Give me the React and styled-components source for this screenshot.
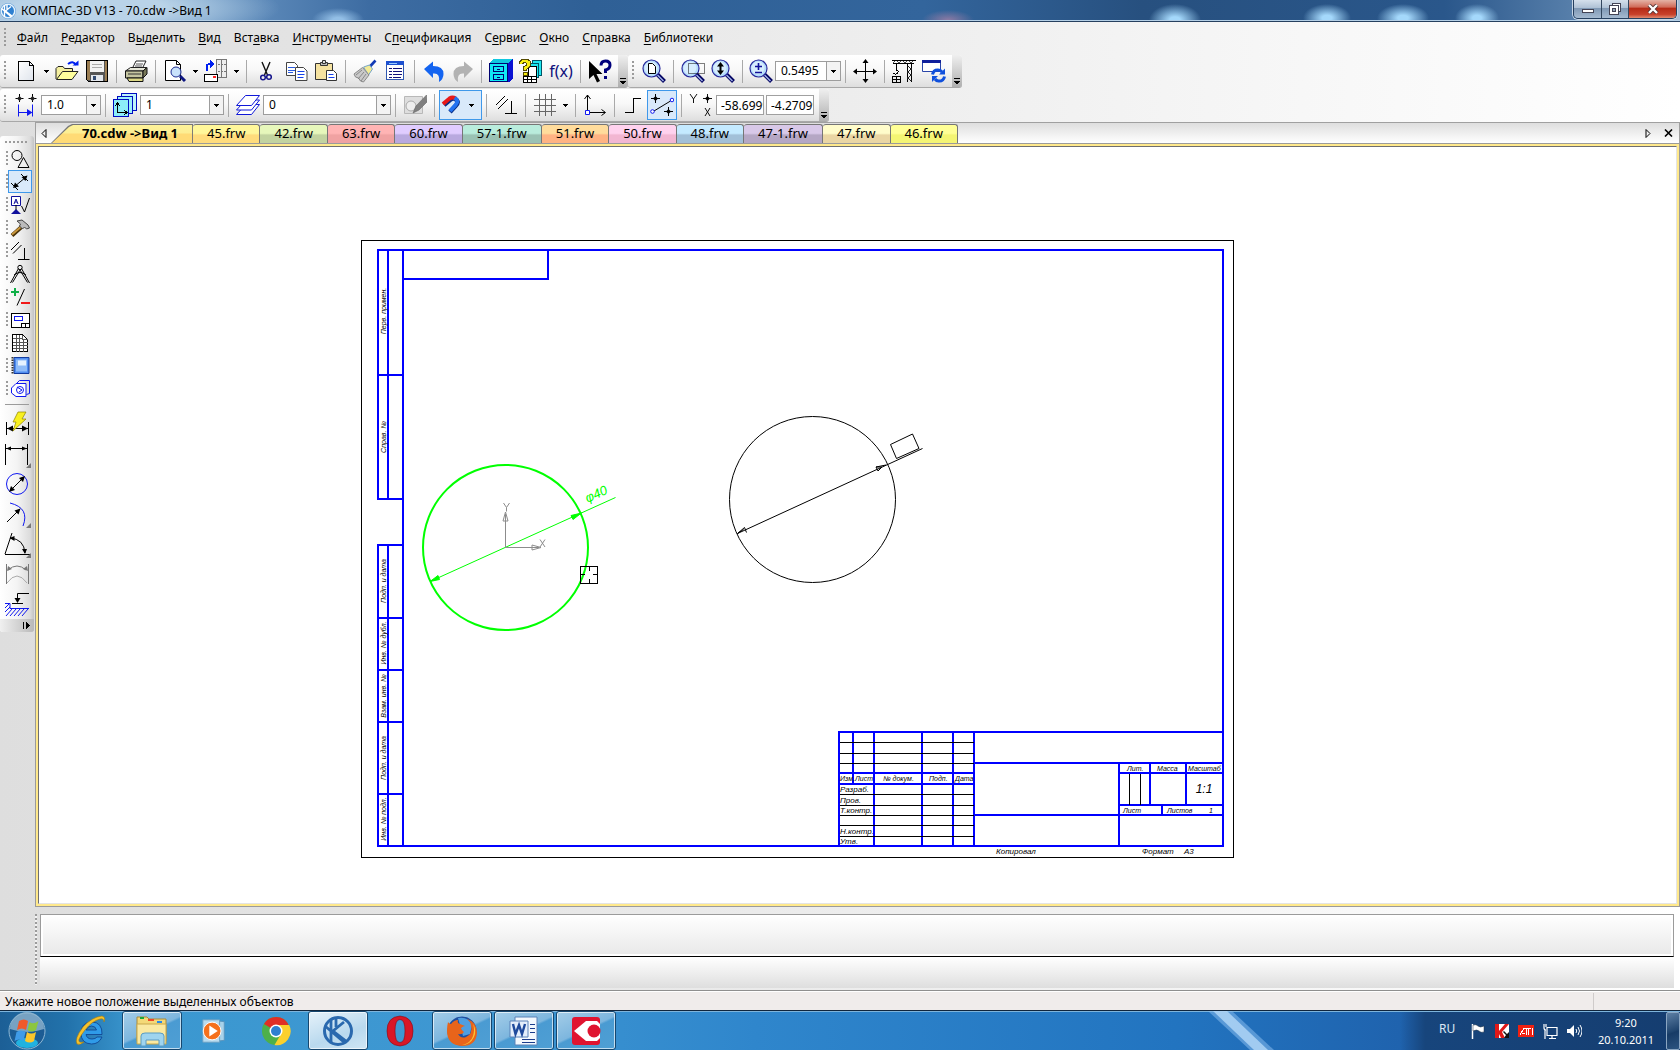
import React from "react";
import styled, { createGlobalStyle } from "styled-components";

const UI = '"Noto Sans", "Open Sans", sans-serif';

const Global = createGlobalStyle`
  * { box-sizing: border-box; }
  html, body, #root { height: 100%; }
  body { margin: 0; font-family: ${UI}; font-size: 12px; line-height: 16px; color: #000; overflow: hidden; }
  button, input, select { font: inherit; color: inherit; margin: 0; padding: 0; }
  button { border: 0; background: none; cursor: default; }
  svg { display: block; }
`;

const Screen = styled.div`
  height: 100vh;
  display: flex;
  flex-direction: column;
  background: linear-gradient(90deg, #dedede 0%, #ebebeb 45%, #f5f5f5 72%, #ffffff 100%);
`;

/* ---------- title bar ---------- */
const TitleBar = styled.header`
  flex: none;
  height: 22px;
  display: flex;
  justify-content: space-between;
  border-bottom: 1px solid #26405f;
  box-shadow: inset 0 -1px 0 #b4cfe6;
  background:
    radial-gradient(ellipse 26px 16px at 1175px 20px, #a4d8fb 20%, transparent 100%),
    radial-gradient(ellipse 24px 14px at 1327px 18px, #a4d8fb 20%, transparent 100%),
    radial-gradient(ellipse 26px 14px at 1403px 18px, #a4d8fb 20%, transparent 100%),
    radial-gradient(ellipse 22px 14px at 1477px 18px, #a4d8fb 20%, transparent 100%),
    radial-gradient(ellipse 26px 12px at 338px 20px, #93bfe6 20%, transparent 100%),
    radial-gradient(ellipse 26px 10px at 948px 20px, #8c7aa4 0%, transparent 100%),
    radial-gradient(ellipse 190px 34px at 90px 8px, #b9d3e8 40%, transparent 100%),
    linear-gradient(90deg, #7fa6cc 0%, #6b97c4 12%, #3d6ca2 22%, #2f6096 35%, #33659c 55%, #27507f 68%, #2a578b 86%, #5f86b0 95%, #a9bfd6 100%);
`;
const TitleText = styled.h1`
  display: flex;
  align-items: center;
  gap: 5px;
  margin: 0;
  font-size: 12px;
  font-weight: 400;
`;
const WindowButtons = styled.div`
  display: flex;
  height: 19px;
  margin-right: 3px;
  border: 1px solid #26405f;
  border-top: 0;
  border-radius: 0 0 5px 5px;
  overflow: hidden;
  box-shadow: 0 0 0 1px #c7d6e6;
`;
const WindowButton = styled.button`
  width: ${(p) => (p.$close ? 48 : 27)}px;
  display: grid;
  place-items: center;
  border-left: ${(p) => (p.$first ? 0 : 1)}px solid #33475f;
  background: ${(p) =>
    p.$close
      ? "linear-gradient(#e4b3a6 0%, #d06a58 40%, #b52a16 45%, #c8402a 80%, #e08a70 100%)"
      : "linear-gradient(#d5e0ec 0%, #b0c2d6 42%, #7f98b4 46%, #a5bad0 100%)"};
`;

/* ---------- menu ---------- */
const MenuBar = styled.nav`
  flex: none;
  height: 33px;
  display: flex;
  align-items: center;
  gap: 13px;
  padding: 0 0 2px 4px;
`;
const MenuItem = styled.button`
  u { text-underline-offset: 2px; }
`;
const Grip = styled.span`
  flex: none;
  width: ${(p) => (p.$across ? "24px" : "2px")};
  height: ${(p) => (p.$across ? "2px" : p.$h ? p.$h + "px" : "20px")};
  background: repeating-linear-gradient(${(p) => (p.$across ? 90 : 180)}deg, #9b9b9b 0 2px, transparent 2px 4px);
`;
const MenuGrip = styled(Grip)`
  margin-right: -2px;
`;

/* ---------- tool bars ---------- */
const BarRows = styled.div`
  flex: none;
  display: flex;
  flex-direction: column;
  gap: 1px;
`;
const BarRow = styled.div`
  display: flex;
`;
const Bar = styled.div`
  display: flex;
  height: 33px;
  border-radius: 3px;
  border-bottom: 1px solid #a8a8a8;
  overflow: hidden;
  background: linear-gradient(#ffffff 0%, #f8f8f8 45%, #dedede 100%);
`;
const BarBody = styled.div`
  display: flex;
  align-items: center;
  padding: 0 3px 0 4px;
  > ${Grip} { margin-right: 5px; }
`;
const Overflow = styled.button`
  width: 10px;
  display: flex;
  align-items: flex-end;
  justify-content: center;
  && { padding-bottom: 3px; }
  background: linear-gradient(#efefef, #b0b0b0);
`;
const Tool = styled.button`
  flex: none;
  width: ${(p) => p.$w || 30}px;
  height: 30px;
  display: flex;
  align-items: center;
  justify-content: center;
  border: 1px solid ${(p) => (p.$on ? "#3f98ea" : "transparent")};
  background: ${(p) => (p.$on ? "#d9e9fa" : "none")};
`;
const Drop = styled.button`
  width: 11px;
  height: 30px;
  display: grid;
  place-items: center;
`;
const Sep = styled.span`
  flex: none;
  width: 1px;
  height: 23px;
  margin: 0 4px;
  background: #a9a9a9;
`;
const Combo = styled.span`
  position: relative;
  width: ${(p) => p.$w}px;
  height: 20px;
  select {
    width: 100%;
    height: 20px;
    padding-left: 5px;
    appearance: none;
    border: 1px solid #9d9d9d;
    border-radius: 0;
    background: #fff;
  }
  svg {
    position: absolute;
    right: 1px;
    top: 1px;
    pointer-events: none;
  }
`;
const Coord = styled.input`
  && { padding-left: 4px; }
  width: 48px;
  height: 20px;
  margin-right: 2px;
  border: 1px solid #a0a0a0;
  background: #fff;
`;
const FxText = styled.span`
  color: #10107c;
  font-size: 16px;
  line-height: 24px;
`;

/* ---------- work area ---------- */
const Work = styled.div`
  flex: 1;
  min-height: 0;
  display: flex;
`;
const Side = styled.aside`
  flex: none;
  width: 35px;
  padding-top: 14px;
`;
const SideBar = styled.div`
  width: 34px;
  display: flex;
  flex-direction: column;
  align-items: center;
  border-radius: 3px;
  overflow: hidden;
  background: linear-gradient(90deg, #ffffff 0%, #f4f4f4 50%, #dcdcdc 88%, #c4c4c4 100%);
  > ${Grip} { margin: 5px 0 4px; }
`;
const SideRow = styled.div`
  height: 23px;
  width: 34px;
  display: flex;
  align-items: center;
  padding-left: 6px;
`;
const SideTool = styled.button`
  width: 24px;
  height: 23px;
  display: grid;
  place-items: center;
  border: 1px solid ${(p) => (p.$on ? "#3f98ea" : "transparent")};
  background: ${(p) => (p.$on ? "#d9e9fa" : "none")};
`;
const BigTool = styled.button`
  width: 34px;
  height: 30px;
  display: grid;
  place-items: center;
`;
const SideRule = styled.span`
  width: 24px;
  height: 1px;
  margin: 4px 0;
  background: #9b9b9b;
`;
const SideMore = styled.button`
  width: 34px;
  height: 13px;
  display: flex;
  align-items: center;
  justify-content: flex-end;
  && { padding-right: 4px; }
  background: linear-gradient(90deg, #f0f0f0, #b9b9b9);
`;
const Main = styled.main`
  flex: 1;
  min-width: 0;
  display: flex;
  flex-direction: column;
`;
const TabStrip = styled.div`
  flex: none;
  height: 21px;
  display: flex;
  align-items: flex-end;
  border: 1px solid #a0a0a0;
  border-bottom: 0;
  font-size: 13px;
  background: linear-gradient(#dedede, #ffffff);
`;
const Nav = styled.button`
  width: ${(p) => p.$w}px;
  height: 20px;
  display: grid;
  place-items: center;
`;
const ActiveShape = styled.span`
  display: flex;
  background: #767676;
  clip-path: polygon(0 100%, 17px 2px, 21px 0, 100% 0, 100% 100%);
`;
const ActiveTab = styled.button`
  height: 19px;
  && { padding: 0 15px 2px 31px; }
  font-weight: 700;
  background: linear-gradient(#fdf39a 0%, #fdee93 48%, #ffdb76 52%, #ffdb76 100%);
  clip-path: polygon(1px 100%, 18px 3px, 22px 1px, calc(100% - 1px) 1px, calc(100% - 1px) 100%);
`;
const Tab = styled.button`
  height: 19px;
  && { padding: 0 14px 2px; }
  border: 1px solid #767676;
  border-left: 0;
  border-bottom: 0;
  border-radius: 3px 3px 0 0;
  background: linear-gradient(${(p) => p.$a} 0%, ${(p) => p.$a} 46%, ${(p) => p.$b} 56%, ${(p) => p.$b} 100%);
`;
const Fill = styled.span`
  flex: 1;
`;
const Frame = styled.section`
  flex: 1;
  min-height: 0;
  border: 1px solid #9b9b9b;
  padding: 2px;
  background: #ffe98c;
`;
const Canvas = styled.div`
  height: 100%;
  border: 1px solid #6f6f6f;
  border-right-color: #e4e4e4;
  border-bottom-color: #e4e4e4;
  background: #fff;
`;
const Drawing = styled.svg`
  width: 100%;
  height: 100%;
`;
const Stamp = styled.text`
  font-family: "Liberation Sans Narrow", "Liberation Sans", sans-serif;
  font-style: italic;
  font-size: ${(p) => p.$s || 7}px;
  text-anchor: ${(p) => (p.$mid ? "middle" : "start")};
  fill: ${(p) => p.$c || "#000"};
`;
const Lower = styled.div`
  flex: none;
  height: 83px;
  display: flex;
  gap: 3px;
  padding-top: 7px;
  > ${Grip} { background: repeating-linear-gradient(180deg, #9b9b9b 0 2px, #f2f2f2 2px 4px); }
`;
const LowerPanels = styled.div`
  flex: 1;
  margin-right: 6px;
`;
const PropertyPanel = styled.div`
  height: 43px;
  border: 1px solid #9b9b9b;
  border-bottom-color: #000;
  box-shadow: inset 0 0 0 2px #fff;
  background: linear-gradient(#ffffff, #e8e8e8);
`;
const MessagePanel = styled.div`
  height: 31px;
  background: linear-gradient(#ffffff, #dedede);
`;
const Status = styled.footer`
  flex: none;
  height: 20px;
  display: flex;
  align-items: center;
  padding: 2px 0 0 5px;
  border-top: 1px solid #8f8f8f;
  box-shadow: inset 0 1px 0 #fff;
  background: #f0eceb;
`;
const StatusCell = styled.span`
  width: 87px;
  height: 17px;
  border-left: 1px solid #cfcbca;
`;

/* ---------- task bar ---------- */
const TaskBar = styled.div`
  flex: none;
  height: 40px;
  display: flex;
  border-top: 1px solid #10253c;
  box-shadow: inset 0 1px 0 #7db4dc;
  background:
    linear-gradient(90deg, transparent 1400px, #17457c 1425px, #153d70 100%),
    linear-gradient(90deg, #1c5f96 0%, #2272ab 4%, #3b98d0 8%, #3e97d2 28%, #2f86cc 45%, #2274c0 70%, #1f62ad 84%);
`;
const StartButton = styled.button`
  width: 60px;
  && { padding-right: 6px; }
  display: grid;
  place-items: center;
`;
const Task = styled.button`
  width: 60px;
  && { margin-right: 2px; }
  display: grid;
  place-items: center;
  border-radius: 3px;
  border: 1px solid ${(p) => (p.$open ? "#16476f" : "transparent")};
  box-shadow: ${(p) => (p.$open ? "inset 0 0 0 1px rgba(255,255,255,0.65)" : "none")};
  background: ${(p) =>
    p.$active
      ? "linear-gradient(160deg, #e6f2fa, #b9d9ee 60%, #cfe6f4)"
      : p.$open
      ? "linear-gradient(155deg, #a4cde8 0%, #7db6de 48%, #4a9bd2 52%, #4f9fd4 100%)"
      : "none"};
`;
const Beam = styled.svg`
  flex: 1;
  min-width: 0;
  height: 39px;
`;
const Tray = styled.div`
  display: flex;
  align-items: center;
  color: #fff;
`;
const Lang = styled.button`
  width: 27px;
  && { padding-bottom: 4px; }
  text-align: left;
  color: #dbe8f5;
`;
const TrayButton = styled.button`
  width: 24px;
  height: 24px;
  display: grid;
  place-items: center;
`;
const Clock = styled.button`
  width: 80px;
  && { font-size: 11px; line-height: 17px; }
  text-align: center;
`;
const ShowDesktop = styled.button`
  width: 14px;
  height: 38px;
  border: 1px solid #8ba6c2;
  border-radius: 2px;
  background: linear-gradient(160deg, #5d7fa4 0%, #20456f 50%, #173b66 55%, #2c5480 100%);
`;

/* ---------- icons ---------- */
const Svg = ({ s = 24, w, h, v, crisp, children }) => (
  <svg width={w || s} height={h || s} viewBox={v || `0 0 ${w || s} ${h || s}`} fill="none"
    shapeRendering={crisp ? "crispEdges" : "auto"} aria-hidden="true">{children}</svg>
);
const Tri = () => <Svg w={5} h={3} crisp><path d="M0 0h5v1h-1v1h-1v1h-1v-1h-1v-1h-1z" fill="#000" /></Svg>;
const More = () => (
  <Svg w={6} h={6} crisp><path d="M0 0h6v1H0zM0 3h6v1H5v1H4v1H2V5H1V4H0z" fill="#000" /></Svg>
);
const Lens = ({ children }) => (
  <Svg s={24}>
    <path d="M15 15l7.500 7.500" stroke="#000060" strokeWidth="4" />
    <path d="M15 15.500l6.500 6.500" stroke="#9fb0e8" strokeWidth="1.500" />
    <circle cx="9.500" cy="9.500" r="8.500" fill="#b4dcfb" stroke="#2a2a9c" strokeWidth="1.200" />
    <circle cx="9" cy="9" r="6.500" fill="#e6f4ff" opacity=".7" />
    {children}
  </Svg>
);
const I = {
  new: <Svg crisp><defs><linearGradient id="pg" x2="1" y2="1"><stop stopColor="#fff" /><stop offset="1" stopColor="#dfe4ec" /></linearGradient></defs>
    <path d="M4.500 2.500h11l4 4v15h-15z" fill="url(#pg)" stroke="#000" /><path d="M15.500 2.500v4h4" stroke="#000" /></Svg>,
  open: <Svg>
    <path d="M1 20V9.500l2-2h5l1.500 2h8V13" fill="#f5f0a0" stroke="#222" />
    <path d="M1.500 20.500l6-8h15.500l-6 8z" fill="#ffff9c" stroke="#222" />
    <path d="M13 5q5-4 8 1" stroke="#0020f0" strokeWidth="2" /><path d="M17.500 6.500h6v-5z" fill="#0020f0" />
  </Svg>,
  save: <Svg crisp><path d="M1.500 1.500h21v21h-19l-2-2z" fill="#555" stroke="#000" /><path d="M2 2h3v19H2z" fill="#9a7d52" />
    <path d="M20 2h2v20h-2z" fill="#9a7d52" /><path d="M5 2h14v11H5z" fill="#f2f2f2" /><path d="M7 5h10M7 8h10" stroke="#aaa" />
    <path d="M6 16h12v6H6z" fill="#e4e8ee" /><path d="M8 17h3v4H8z" fill="#334c74" /></Svg>,
  print: <Svg><path d="M8 10l4-8h10l-4 8z" fill="#fff" stroke="#222" /><path d="M12 5h7M11 7h7" stroke="#555" />
    <path d="M1.500 12l5-3.500h16L19 12z" fill="#e6e6d8" stroke="#222" /><path d="M1.500 12H19v7H1.500z" fill="#c4c4a0" stroke="#111" />
    <path d="M19 12l4-3.500V15l-4 4z" fill="#777758" stroke="#111" /><path d="M3 19h16v3.500H5z" fill="#dcd886" stroke="#111" /><path d="M4 15h13" stroke="#333" /></Svg>,
  preview: <Svg><path d="M2.500 1.500h11l4 4v16h-15z" fill="#fff" stroke="#000" /><path d="M13.500 1.500v4h4" stroke="#000" />
    <path d="M17 17l5 5" stroke="#0d1580" strokeWidth="3" /><circle cx="13" cy="13" r="5" fill="#c9e2fb" stroke="#1a2a90" /></Svg>,
  orient: <Svg crisp><path d="M12.500.5h10v18h-10zM17.500.5v18" fill="#eee" stroke="#777" /><path d="M14 5h8M14 12h8" stroke="#777" strokeDasharray="2 1" />
    <path d="M.5 15.500h13v7H.5z" fill="#fff" stroke="#000" /><path d="M9 17h3v2H9z" fill="#f22" />
    <path d="M2.500 12V8q0-3 4-3" stroke="#0020f0" strokeWidth="2" /><path d="M6 1l4 4-4 4z" fill="#0020f0" /></Svg>,
  cut: <Svg><path d="M8 3l5.500 13M16 3l-5.500 13" stroke="#111" strokeWidth="1.400" /><circle cx="9" cy="18.500" r="2.300" stroke="#16168c" strokeWidth="1.500" />
    <circle cx="15" cy="18" r="2.300" stroke="#16168c" strokeWidth="1.500" /></Svg>,
  copy: <Svg><path d="M2.500 3.500h8l3 3v10h-11z" fill="#fff" stroke="#444" /><path d="M4 8.500h7M4 11.500h7M4 13.500h5" stroke="#2a5be0" />
    <path d="M11.500 8.500h8l3.500 3.500v9.500H11.500z" fill="#fff" stroke="#444" /><path d="M13.500 12.500h7M13.500 15.500h7M13.500 18.500h6" stroke="#1540e8" /></Svg>,
  paste: <Svg><path d="M1.500 4.500h17v16h-17z" fill="#f5e2a0" stroke="#333" /><path d="M6.500 3.500h7v3h-7z" fill="#bbb" stroke="#333" /><path d="M8.500 1.500h3v3h-3z" fill="#ddd" stroke="#333" />
    <path d="M12.500 11.500h7l3 3v7h-10z" fill="#fff" stroke="#333" /><path d="M14.500 15.500h5M14.500 18.500h6" stroke="#1540e8" /></Svg>,
  brush: <Svg><path d="M22.500 1.500l-6 6.500" stroke="#123bb5" strokeWidth="2.600" /><path d="M10.500 8l6-2 3 4-4 6z" fill="#f3eb96" stroke="#76a5c8" />
    <path d="M9.500 8.500l6.500 7.500-5.500 7-3-1-2-3-3-1-1.500-3z" fill="#c9c9c9" stroke="#888" /><path d="M9 11l-6 5M11 13l-6 7M13 15l-5 7" stroke="#777" strokeWidth=".8" /></Svg>,
  props: <Svg crisp><path d="M3.500 2.500h17v18h-17z" fill="#fff" stroke="#3058b0" /><path d="M3 2h18v4H3z" fill="#1c50d0" /><path d="M6 4h8" stroke="#9cf" />
    <path d="M6 9.500h3M6 12.500h3M6 15.500h3M6 18.500h3M10 9.500h9M10 12.500h9M10 15.500h9M10 18.500h8" stroke="#12127a" /></Svg>,
  undo: <Svg><path d="M2 10L11 2.500v4.500q10.500 0 10.500 8 0 5-4.500 8 1.500-9.500-6-8.500V19z" fill="#1464f0" /></Svg>,
  redo: <Svg><path d="M22 10L13 2.500v4.500Q2.500 7 2.500 15q0 5 4.500 8-1.500-9.500 6-8.500V19z" fill="#b2b2b2" /></Svg>,
  cabinet: <Svg crisp><path d="M0 4l4-4h20v19l-4 4H0z" fill="#0a12d2" /><path d="M0 4l4-4h19l-4 4z" fill="#10c8e0" /><path d="M.5 4.500h18v18H.5z" fill="#10e8f4" stroke="#000070" />
    <path d="M4.500 7.500h10v5h-10zM4.500 15.500h10v5h-10zM8 10h3M8 18h3" stroke="#000070" /></Svg>,
  manager: <Svg crisp><path d="M13.500 1.500h9v15h-9z" fill="#20e8f0" stroke="#056" /><path d="M11.500 4.500h8v14h-8z" fill="#20e8f0" stroke="#056" />
    <path d="M9.500 7.500h8v10h-8z" fill="#fff" stroke="#000" /><path d="M4.500 17.500h13v6h-13zM4.500 20.500h13M8.500 17.500v6M12.500 17.500v6" fill="#fff" stroke="#000" />
    <path d="M2 5q0-3 4-3t4 3q0 2-4 4v3" stroke="#554b00" strokeWidth="4.500" /><path d="M2 5q0-3 4-3t4 3q0 2-4 4v2" stroke="#f8ee10" strokeWidth="2.600" /><path d="M4 13.500h4v3H4z" fill="#f8ee10" stroke="#554b00" /></Svg>,
  help: <Svg><path d="M1 2v18l4.500-4 3.500 7.500 3-1.500L8.500 15h6z" fill="#000" /><path d="M13 6.500Q13 2 17.500 2T22 6t-4.500 5v3" stroke="#00007c" strokeWidth="3" /><path d="M16 17h3v3h-3z" fill="#00007c" /></Svg>,
  zpage: <Lens><path d="M6.500 4.500h4l3 3v7h-7z" fill="#fff" stroke="#000" /></Lens>,
  zrect: <Lens><path d="M7.500 4.500h16v10h-16z" stroke="#000" strokeDasharray="1 1" /></Lens>,
  zdyn: <Lens><path d="M9.500 3l3.500 4.500h-2.500v4H13l-3.500 4.500-3.500-4.500h2.500v-4H6z" fill="#000" /></Lens>,
  zpm: <Lens><path d="M9.500 4v7M6 7.500h7M6 13.500h7" stroke="#10109a" strokeWidth="1.600" /></Lens>,
  move: <Svg><path d="M12.500 2v20M1 12.500h22" stroke="#000" /><path d="M12.500 0l3 4h-6zM12.500 24l3-4h-6zM0 12.500l4-3v6zM24 12.500l-4-3v6z" fill="#000" /></Svg>,
  crane: <Svg crisp><path d="M0 1.500h24M1 4.500h21" stroke="#000" /><path d="M1 4l3-3 3 3 3-3 3 3 3-3 3 3 3-3" stroke="#000" strokeWidth=".7" /><path d="M4.500 5v6q3 1 1 3t-4 0" stroke="#000" />
    <path d="M15.500 5v18M19.500 5v18" stroke="#000" /><path d="M15 7l5 3-5 3 5 3-5 3 5 3" stroke="#222" /><path d="M.5 17.500h8v6h-8zM4.500 17.500v6M.5 20.500h8" stroke="#000" /></Svg>,
  refresh: <Svg><path d="M.5 1.500h18v11H.5z" fill="#fff" stroke="#2b46a8" /><path d="M0 1h19v3H0z" fill="#10209c" />
    <path d="M10.500 15.500q1-5 6-4.500 2 0 3.500 2" stroke="#1050dc" strokeWidth="3" /><path d="M23 9.500v6h-6z" fill="#1050dc" />
    <path d="M22.500 17.500q-1 5-6 4.500-2 0-3.500-2" stroke="#1050dc" strokeWidth="3" /><path d="M10 23v-6h6z" fill="#1050dc" /></Svg>,
  step: <Svg><path d="M5.500 1v8M1.500 5.500h8M18.500 1v8M14.500 5.500h8" stroke="#000" /><path d="M5.500 3l2.500 2.500L5.500 8 3 5.500zM18.500 3l2.500 2.500-2.500 2.500L16 5.500z" fill="#222" /><path d="M4.500 11.500v12M18.500 11.500v12M5 19.500h12" stroke="#1018f0" /><path d="M13 16l5.500 3.500L13 23z" fill="#1018f0" /></Svg>,
  views: <Svg crisp><path d="M8.500.5h15v17h-15z" fill="#bff4fa" stroke="#000cc0" /><path d="M4.500 3.500h15v17h-15z" fill="#9ef0fa" stroke="#000cc0" /><path d="M.5 6.500h15v17H.5z" fill="#8ceef8" stroke="#000cc0" />
    <path d="M4.500 11v8.500H13M2 13l2.500-3L7 13M11 17l3 2.500-3 2.500" stroke="#000" /></Svg>,
  layers: <Svg><path d="M.5 21.500L9.500 11.500h14l-8 10z" fill="#fff" stroke="#1018d8" /><path d="M.5 17L9.500 7h14l-8 10z" fill="#fff" stroke="#1018d8" /><path d="M.5 12.500L9.500 2.500h14l-8 10z" fill="#fff" stroke="#1018d8" /></Svg>,
  edit: <Svg><path d="M1.500 3.500h18v17h-18z" fill="#dedede" stroke="#b8b8b8" /><circle cx="8" cy="13" r="5" stroke="#aaa" fill="#eee" /><path d="M23.500 2L13 13l-3 7 6-3 8-8z" fill="#808080" stroke="#666" strokeWidth=".6" /></Svg>,
  magnet: <Svg s={22}><path d="M4 11l6-5q4-3 6.500 0t-1 6L10 18" stroke="#0a2f86" strokeWidth="4.500" /><path d="M3 10l6.500-5.500q3-2 6 0" stroke="#e81818" strokeWidth="4" /><path d="M14.500 4q5 2.500 1 7l-5.500 6" stroke="#2272f0" strokeWidth="4" /></Svg>,
  perp: <Svg><path d="M2 12L11 3M4 16L14 6M17.500 8v12.500M11 20.500h12" stroke="#000" /></Svg>,
  grid: <Svg crisp><path d="M6.500 1v22M12.500 1v22M18.500 1v22M1 6.500h22M1 12.500h22M1 18.500h22" stroke="#666" /></Svg>,
  axes: <Svg><path d="M4.500 17V2M1.500 6l3-4 3 4M7 19.500h15M18.500 16.500l4 3-4 3" stroke="#000" /><path d="M2.500 17.500h4v4h-4z" fill="#fff" stroke="#1018f0" /></Svg>,
  ortho: <Svg crisp><path d="M4 19.500h8.500V5.500H20" stroke="#000" /></Svg>,
  round: <Svg><path d="M4 18L20.500 8" stroke="#000" /><circle cx="22" cy="7" r="1.800" stroke="#1018f0" fill="#fff" /><circle cx="2.500" cy="18.500" r="1.800" stroke="#1018f0" fill="#fff" /><path d="M5.500 1v9M1 5.500h9M18.500 14v9M14 18.500h9" stroke="#000" /><path d="M5.500 3l2.500 2.500L5.500 8 3 5.500zM18.500 16l2.500 2.500-2.500 2.500-2.500-2.500z" fill="#000" /></Svg>,
  yx: <Svg><path d="M1 1l3.500 5L8 1M4.500 6v4M16 15l5 8M21 15l-5 8M18.500 1v9M14 5.500h9" stroke="#111" /><path d="M18.500 3l2.500 2.500L18.500 8 16 5.500z" fill="#000" /></Svg>,
};
const S = {
  geometry: <Svg s={20}><circle cx="7" cy="6.500" r="5" stroke="#000" /><path d="M13.500 8.500l5.500 10H8z" fill="#eee" stroke="#000" /></Svg>,
  dims: <Svg s={20}><path d="M1 11l7 7M11 2l7 7M4 15L16 5" stroke="#000" /><path d="M3 16l2-5.500 4 4zM17.500 3.500l-2 5.500-4-4z" fill="#000" /></Svg>,
  symbols: <Svg s={20}><path d="M1.500 1.500h9v9h-9z" fill="#fff" stroke="#10109c" /><path d="M4 9l2-5 2 5M5 7h2" stroke="#10109c" /><path d="M6 10v6M11.500 11l3 6 5-14" stroke="#000" /><path d="M1 19l5-5 5 5z" fill="#10109c" /></Svg>,
  edit: <Svg s={20}><path d="M2 17.500L12 8.500" stroke="#4a3208" strokeWidth="4" /><path d="M2 16.500L12 8" stroke="#c8963c" strokeWidth="2" /><path d="M7 3l5-1 6 5 1.500 3-3 1-2-2-2 2-3-3 1-2z" fill="#bbb" stroke="#444" /></Svg>,
  param: <Svg s={20}><path d="M1 9l8-8M3 12.500L11.500 4M14.500 7v11.500M8 18.500h11.500" stroke="#000" /></Svg>,
  measure: <Svg s={20}><circle cx="10" cy="3.500" r="2.200" stroke="#000" /><path d="M8.500 4.500L.5 19M11.500 4.500L19.500 19M10 6L2.500 18.500M10 6l7.500 12.500M4 11q6-5 12 0" stroke="#000" /></Svg>,
  select: <Svg s={20}><path d="M5 1v8M1 5h8" stroke="#10b048" strokeWidth="2" /><path d="M14.500 2L7 18.500" stroke="#000" /><path d="M11 16h9" stroke="#f01818" strokeWidth="2" /></Svg>,
  views: <Svg s={20} crisp><path d="M1.500 3.500h18v14h-18z" fill="#fff" stroke="#000" /><path d="M4.500 6.500h8v4h-8z" stroke="#1018f0" /><path d="M11.500 13.500h8v4h-8zM15.500 13.500v4" stroke="#000" /></Svg>,
  spec: <Svg s={20} crisp><path d="M2.500 1.500h10l5 5v12h-15z" fill="#fff" stroke="#000" /><path d="M12.500 1.500v5h5M2.500 5.500h10M2.500 9.500h15M2.500 12.500h15M2.500 15.500h15M6.500 1.500v17M9.500 1.500v17M13.500 6.500v12" stroke="#555" /></Svg>,
  report: <Svg s={20}><path d="M4 1.500h15v16H4z" fill="#4f8cf0" stroke="#123a9c" /><path d="M6 3.500h11v12H6z" fill="#8fbcf8" /><path d="M8 4.500h8v5H8z" fill="#e6f2ff" /><path d="M2.500 1v17" stroke="#333" strokeWidth="2" strokeDasharray="1.500 1" /></Svg>,
  insert: <Svg s={20}><path d="M6.500 4.500l3-3h10v13l-3 1" stroke="#1018f0" /><path d="M1.500 9l4.500-4.500h10v13H6L1.500 14z" fill="#fff" stroke="#1018f0" /><circle cx="10" cy="11" r="3.500" stroke="#1018f0" /><path d="M7 8l5 3-3 2" stroke="#1018f0" /></Svg>,
};
const B = {
  auto: <Svg s={26}><path d="M2.500 11v13M24.500 11v13M2 17.500h22" stroke="#000" /><path d="M3 17.500l6-3v6zM24 17.500l-6-3v6z" fill="#000" /><path d="M14 1h8l-4 7h4L9 20l3-9H9z" fill="#f8f020" stroke="#8c8200" strokeWidth=".7" /></Svg>,
  linear: <Svg s={28}><path d="M2.500 4v21M24.500 4v21M3 8.500h21" stroke="#000" /><path d="M3 8.500l5-2v4zM24 8.500l-5-2v4z" fill="#000" /><path d="M28 23v5h-5z" fill="#777" /></Svg>,
  diam: <Svg s={26}><circle cx="13" cy="13" r="10.500" stroke="#1018f0" /><path d="M6 20L20 6" stroke="#000" /><path d="M5 21l2-6 4 4zM21 5l-2 6-4-4z" fill="#000" /></Svg>,
  radius: <Svg s={28}><path d="M7 3q20 5 13 23" stroke="#1018f0" /><path d="M4 22L16 10" stroke="#000" /><path d="M17.500 8.500l-2 6-4-4z" fill="#000" /><path d="M28 23v5h-5z" fill="#777" /></Svg>,
  angle: <Svg s={28}><path d="M2 24L9 3M2 24.500h25M7 8q14 1 15 15" stroke="#000" /><path d="M6.500 8l5-2v5zM22 24l-3-5h5z" fill="#000" /><path d="M28 23v5h-5z" fill="#777" /></Svg>,
  arc: <Svg s={26}><path d="M2.500 3v20M24.500 3v20M4 9q9-8 18 0" stroke="#777" /><path d="M3 10l1-5 4 3zM24 10l-1-5-4 3z" fill="#777" /><path d="M3 22q10-14 20 0" stroke="#aaa" /></Svg>,
  level: <Svg s={26}><path d="M13.500 11V2.500H25M8 12.500h11" stroke="#000" /><path d="M13.500 12l-3-5h6z" fill="#000" /><path d="M1 12.500h5v5h19" stroke="#1018f0" /><path d="M2 25l6-7M6 25l6-7M10 25l6-7M14 25l6-7M18 25l6-7M1 17l4-4M1 21l5-5" stroke="#1018f0" /></Svg>,
};

const menu = [["", "Ф", "айл"], ["", "Р", "едактор"], ["В", "ы", "делить"], ["", "В", "ид"], ["Вст", "а", "вка"], ["", "И", "нструменты"],
  ["С", "п", "ецификация"], ["С", "е", "рвис"], ["", "О", "кно"], ["", "С", "правка"], ["", "Б", "иблиотеки"]];

const tabs = [["45.frw", "#fff79a", "#ffdc7c"], ["42.frw", "#e6f7bb", "#c2d3a0"], ["63.frw", "#ffb4b4", "#f0a2a2"], ["60.frw", "#e0ccff", "#b9a9df"],
  ["57-1.frw", "#b9ecdc", "#9ac2b4"], ["51.frw", "#ffdc9c", "#ffb383"], ["50.frw", "#ffd2ee", "#f2b6d2"], ["48.frw", "#c4eaff", "#a2c0d8"],
  ["47-1.frw", "#d8c8e8", "#b5a7c4"], ["47.frw", "#fffccb", "#ead6a4"], ["46.frw", "#ffff96", "#f4f573"]];

const T = ({ i, label, on, w, drop }) => (
  <>
    <Tool $on={on} $w={w} aria-label={label} title={label}>{i}</Tool>
    {drop && <Drop aria-label={`${label}: список`}><Tri /></Drop>}
  </>
);
const Pick = ({ w, value, label }) => (
  <Combo $w={w}>
    <select aria-label={label} defaultValue={value}><option>{value}</option></select>
    <svg width="14" height="18" shapeRendering="crispEdges" aria-hidden="true">
      <rect width="14" height="18" fill="#f3f3f3" /><path d="M.5 0v18" stroke="#9d9d9d" /><path d="M5 8h5v1h-1v1h-1v1h-1v-1h-1v-1h-1z" fill="#000" />
    </svg>
  </Combo>
);

const side = [["geometry", "Геометрия"], ["dims", "Размеры"], ["symbols", "Обозначения"], ["edit", "Редактирование"], ["param", "Параметризация"],
  ["measure", "Измерения"], ["select", "Выделение"], ["views", "Виды"], ["spec", "Спецификация"], ["report", "Отчеты"], ["insert", "Вставки"]];
const big = [["auto", "Авторазмер"], ["linear", "Линейный размер"], ["diam", "Диаметральный размер"], ["radius", "Радиальный размер"],
  ["angle", "Угловой размер"], ["arc", "Размер дуги"], ["level", "Размер высоты"]];

const margin = [["Перв. примен.", 311], ["Справ. №", 437], ["Подп. и дата", 581], ["Инв. № дубл.", 643], ["Взам. инв. №", 696], ["Подп. и дата", 758], ["Инв. № подл.", 819]];
const stampText = [["Изм.", 840, 781], ["Лист", 855, 781], ["№ докум.", 883, 781], ["Подп.", 929, 781], ["Дата", 955, 781],
  ["Разраб.", 840, 792], ["Пров.", 840, 803], ["Т.контр.", 840, 813], ["Н.контр.", 840, 834], ["Утв.", 840, 844],
  ["Лит.", 1127, 771], ["Масса", 1157, 771], ["Масштаб", 1188, 771], ["Лист", 1123, 813], ["Листов", 1167, 813], ["1", 1209, 813],
  ["Копировал", 996, 854], ["Формат", 1142, 854], ["А3", 1184, 854]];

function CadDrawing() {
  return (
    <Drawing role="img" aria-label="Чертеж">
      <g transform="translate(-39 -147)" fill="none">
        <path shapeRendering="crispEdges" d="M361.500 240.500h872v617h-872z" stroke="#000" />
        <g shapeRendering="crispEdges" stroke="#0000ff" strokeWidth="2">
          <path d="M403 250h820v596H403zM378 249v250h25M388 250v249M378 250h25M378 375h25M548 250v29H403" />
          <path d="M403 545h-25v301h25M388 545v301M378 618h25M378 670h25M378 722h25M378 794h25" />
          <path d="M839 846V732h384M853 732v52M874 732v114M922 732v114M953 732v114M974 732v114M839 773h135M839 784h135M974 763h249M974 815h249" />
          <path d="M1119 763v83M1119 773h104M1119 805h104M1150 763v42M1186 763v42M1162 805v10" />
        </g>
        <path shapeRendering="crispEdges" stroke="#000" d="M840 742.500h134M840 753.500h134M840 763.500h134M840 794.500h134M840 805.500h134M840 815.500h134M840 825.500h134M840 836.500h134M1129.500 774v31M1140.500 774v31" />
        {stampText.map(([t, x, y]) => <Stamp key={t + x} x={x} y={y} $s={y > 850 || (x === 840 && y > 785) ? 8 : 7}>{t}</Stamp>)}
        <Stamp x="1204" y="793" $s={12} $mid>1:1</Stamp>
        {margin.map(([t, y]) => <Stamp key={y} $mid transform={`translate(386 ${y}) rotate(-90)`}>{t}</Stamp>)}

        <circle cx="505.500" cy="547.500" r="82.500" stroke="#00ff00" strokeWidth="2" />
        <path d="M430 581.500L615.500 497.500" stroke="#00ff00" />
        <path d="M430 581.500l8-6 1.500 4zM581.500 513l-10.500 2.500 2 4z" fill="#00ff00" stroke="#00ff00" />
        <Stamp $s={13} $c="#00ff00" $mid transform="translate(598 498) rotate(-24)">φ40</Stamp>
        <path d="M505.500 547.500V514M505.500 547.500H539" stroke="#8c8c8c" />
        <path d="M505.500 512l-2.500 9h5zM541 547.500l-9-2.500v5z" stroke="#8c8c8c" />
        <path d="M503.500 503l3 4.500 3-4.500M506.500 507.500v4M540 539.500l5 7.500M545 539.500l-5 7.500" stroke="#8c8c8c" />

        <circle cx="812.500" cy="499.500" r="83" stroke="#000" />
        <path d="M737.500 533.500L922.500 448.500" stroke="#000" />
        <path d="M737.500 533.500l7-6 2 5M737.500 533.500l6-4M886 465l-10 2M876 467l2 4 4-4z" stroke="#000" />
        <path d="M890.500 444.500l22-10.500 6.500 14.500-22.500 10z" stroke="#000" />
        <path shapeRendering="crispEdges" d="M580.500 566.500h17v17h-17zM589.500 567v4M589.500 579v4M581 574.500h4M593 574.500h4" stroke="#000" />
      </g>
    </Drawing>
  );
}

const KLogo = ({ s, flat }) => (
  <Svg s={s} v="0 0 32 32">
    {!flat && <circle cx="16" cy="16" r="15.500" fill="#2d7fd0" />}
    <circle cx="16" cy="16" r="13.500" stroke={flat ? "#2a69ae" : "#e4f1fb"} strokeWidth="3" />
    <path d="M9 4v24M22 7L11 16l13 10M3 11l20 17M14 3v9" stroke={flat ? "#2a69ae" : "#fff"} strokeWidth="2.800" />
  </Svg>
);
const L = {
  start: <Svg s={38} v="0 0 38 38"><circle cx="19" cy="19" r="18" fill="#1c5c94" stroke="#8fb8d4" /><path d="M2 17a17 17 0 0134 0q-17 6-34 0z" fill="#8fb4ce" opacity=".8" />
    <ellipse cx="19" cy="31" rx="11" ry="5" fill="#22c8f4" opacity=".8" />
    <path d="M11 9q5-3 9 0l-2 9q-4-3-9 0z" fill="#f0592a" /><path d="M21.500 10q4 3 9-1l-2.500 9q-4 3-8.500 0z" fill="#8cc63e" />
    <path d="M8.500 20q4-3 9 0l-2 9q-4-3-9 0z" fill="#3f9be8" /><path d="M19 20q4 3 9 0l-2 9q-4 3-9 0z" fill="#fbc62c" /></Svg>,
  ie: <Svg s={34} v="0 0 34 34"><path fillRule="evenodd" d="M29 20.500H13q1 4.500 6 4.500 3.500 0 5-2h5q-3 7-10.500 7Q8 29.500 8 19T18.500 8Q29.500 8 29 20.500zM13 16h10.500q-1-4-5-4T13 16z" fill="#2f9be8" stroke="#0c3f8c" strokeWidth=".8" />
    <path d="M4 30Q1 25 10 13 19 3 29 2q4 1 2 6 0-4-4-3-8 2-15 11T6 27q0 2 5 1-4 3.500-7 2z" fill="#f5c22c" stroke="#a87a08" strokeWidth=".6" /></Svg>,
  explorer: <Svg s={34} v="0 0 34 34"><path d="M2 3h10l2 2h17v22H2z" fill="#f4d978" stroke="#a88a3a" /><path d="M5 3h4v2H5z" fill="#1aa83a" /><path d="M13 5h6v2h-6z" fill="#f04a28" /><path d="M22 7h5v2h-5z" fill="#2a8ae8" />
    <path d="M2 10h29v20H2z" fill="#fae9a2" stroke="#c8a84c" /><path d="M6 32V22q0-3 4-3h15q4 0 4 3v10h-5v-6H11v6z" fill="#9fd4ef" stroke="#5a9cc4" /></Svg>,
  wmp: <Svg s={28} v="0 0 30 30"><path d="M9 3l17 2v20l-17 2z" fill="#a8d2ea" stroke="#5a94bc" /><path d="M3 3h18v24H3z" fill="#b9dcf0" stroke="#6aa0c4" /><circle cx="13" cy="15" r="9.500" fill="#f5701c" stroke="#fff" /><path d="M10 9l9 6-9 6z" fill="#fff" /></Svg>,
  chrome: <Svg s={30} v="0 0 30 30"><circle cx="15" cy="15" r="14" fill="#4db04a" /><path d="M15 15L3 8A14 14 0 0127.500 8.500z" fill="#e02e26" /><path d="M15 9h13.200A14 14 0 0113.500 29L20 18z" fill="#fbd02c" /><circle cx="15" cy="15" r="6.500" fill="#fff" /><circle cx="15" cy="15" r="5" fill="#2f7fd0" /></Svg>,
  opera: <Svg s={32} v="0 0 32 32"><path fillRule="evenodd" d="M16 1q13 1 13 15T16 31Q3 30 3 16T16 1zm0 3.500q-5 0-5 11.500t5 11.500T21 16 16 4.500z" fill="#d81626" stroke="#8c0610" strokeWidth=".6" /></Svg>,
  firefox: <Svg s={34} v="0 0 34 34"><circle cx="17" cy="17" r="14.500" fill="#1f4fa0" /><path d="M13 4q10-2 14 7l-2 9-7 2z" fill="#4f9ee0" /><path d="M3 8q1 2 3 2 3-4 7-4-1 3 2 4l5 2q-4 1-4 3l3 3q-2 3-6 2 3 5 8 3 7-3 5-12-1-4-4-6 10 3 10 14Q31 32 17 32 2 31 2 17q0-5 1-9z" fill="#e8641a" /><path d="M28 10q4 6 1 13-4 8-12 8 9-2 11-9t0-12z" fill="#fbc434" /></Svg>,
  word: <Svg s={34} v="0 0 34 34"><path d="M8 3h22v28H8z" fill="#f3f8fd" stroke="#5a82b8" /><path d="M23 10.500h5M23 14.500h5M23 18.500h5M15 25.500h13M15 28.500h13" stroke="#1a3c8c" /><path d="M3 7h18v16H3z" fill="#e4eefb" stroke="#5a82b8" /><path d="M6 10l2.500 10L12 11l3 9 3-10" stroke="#1f4a9c" strokeWidth="2.400" /></Svg>,
  viewer: <Svg s={30} v="0 0 30 30"><rect x="1" y="1" width="28" height="28" rx="3" fill="#e01430" /><path d="M3 15L15 5h11l3 3v14l-3 3H15z" fill="#fff" /><circle cx="23" cy="15" r="6.500" fill="#e01430" /></Svg>,
};
const trayIcons = [
  ["Центр поддержки", <Svg s={16}><path d="M2.500 1v15" stroke="#fff" strokeWidth="1.500" /><path d="M3 2q3-1 5 1t6 0v6q-3 1-5-1t-6 0z" fill="#fff" stroke="#234" strokeWidth=".5" /></Svg>],
  ["Антивирус", <Svg s={16}><path d="M1 1h14v14H1z" fill="#fff" /><path d="M1 1h4v7l6-7h4L8 9l3 6H7L5 11v4H1z" fill="#e01818" /><path d="M15 15V9l-2 2-3-3-1 1 3 3-2 3z" fill="#111" /></Svg>],
  ["Видеокарта", <Svg w={16} h={12} crisp><path d="M0 0h16v12H0z" fill="#f02010" /><path d="M2 10l4-7h2v7M4 8h3M9 3.500h4M10.500 4v6M14.500 3v7" stroke="#fff" /></Svg>],
  ["Сеть", <Svg s={16}><path d="M5 4.500h10v8H5zM7 15.500h7M10 13v2M2 1v4q0 2 2 2M4 1v3M3 7v9" stroke="#fff" strokeWidth="1.200" /></Svg>],
  ["Звук", <Svg s={16}><path d="M1 6h3l4-4v12l-4-4H1z" fill="#fff" /><path d="M10 6q1.500 2 0 4M12 4q3 4 0 8M14 2q4 6 0 12" stroke="#fff" /></Svg>],
];

export default function App() {
  return (
    <Screen>
      <Global />
      <TitleBar>
        <TitleText><KLogo s={16} />КОМПАС-3D V13 - 70.cdw -&gt;Вид 1</TitleText>
        <WindowButtons>
          <WindowButton $first aria-label="Свернуть"><Svg w={12} h={10} crisp><path d="M.5 5.500h11v3H.5z" fill="#fff" stroke="#445" /></Svg></WindowButton>
          <WindowButton aria-label="Восстановить"><Svg w={12} h={12} crisp><path d="M3.500.5h8v8h-8z" fill="#fff" stroke="#445" /><path d="M.5 2.500h9v9h-9z" fill="#fff" stroke="#445" /><path d="M3.500 5.500h3v3h-3z" fill="#9ab" stroke="#445" /></Svg></WindowButton>
          <WindowButton $close aria-label="Закрыть"><Svg w={12} h={10}><path d="M2 1l8 8M10 1L2 9" stroke="#533" strokeWidth="4" /><path d="M2 1l8 8M10 1L2 9" stroke="#fff" strokeWidth="2.400" /></Svg></WindowButton>
        </WindowButtons>
      </TitleBar>
      <MenuBar>
        <MenuGrip />
        {menu.map(([a, b, c]) => <MenuItem key={a + b + c}>{a}<u>{b}</u>{c}</MenuItem>)}
      </MenuBar>
      <BarRows>
        <BarRow>
          <Bar>
            <BarBody>
              <Grip />
              <T i={I.new} label="Создать" drop /><T i={I.open} label="Открыть" /><T i={I.save} label="Сохранить" /><Sep />
              <T i={I.print} label="Печать" /><Sep />
              <T i={I.preview} label="Предварительный просмотр" drop /><T i={I.orient} label="Ориентация" drop /><Sep />
              <T i={I.cut} label="Вырезать" /><T i={I.copy} label="Копировать" /><T i={I.paste} label="Вставить" /><Sep />
              <T i={I.brush} label="Копировать свойства" /><T i={I.props} label="Свойства" /><Sep />
              <T i={I.undo} label="Отменить" /><T i={I.redo} label="Повторить" w={28} /><Sep />
              <T i={I.cabinet} label="Библиотеки" /><T i={I.manager} label="Менеджер" /><T i={<FxText>f(x)</FxText>} label="Переменные" /><Sep />
              <T i={I.help} label="Справка" />
            </BarBody>
            <Overflow aria-label="Еще"><More /></Overflow>
          </Bar>
          <Bar>
            <BarBody>
              <Grip />
              <T i={I.zpage} label="Показать все" /><Sep />
              <T i={I.zrect} label="Увеличить рамкой" /><T i={I.zdyn} label="Масштаб динамически" /><Sep />
              <T i={I.zpm} label="Масштаб" w={28} /><Pick w={66} value="0.5495" label="Текущий масштаб" /><Sep />
              <T i={I.move} label="Сдвинуть" /><Sep />
              <T i={I.crane} label="Перестроить" /><T i={I.refresh} label="Обновить" />
            </BarBody>
            <Overflow aria-label="Еще"><More /></Overflow>
          </Bar>
        </BarRow>
        <BarRow>
          <Bar>
            <BarBody>
              <Grip />
              <T i={I.step} label="Шаг курсора" /><Pick w={60} value="1.0" label="Шаг курсора" /><Sep />
              <T i={I.views} label="Состояния видов" /><Pick w={84} value="1" label="Вид" /><Sep />
              <T i={I.layers} label="Слои" /><Pick w={128} value="0" label="Слой" /><Sep />
              <T i={I.edit} label="Эскиз" /><Sep />
              <Tool $on $w={43} aria-label="Привязки">{I.magnet}<Fill /><Tri /><Fill /></Tool><Sep />
              <T i={I.perp} label="Параметрический режим" /><Sep />
              <T i={I.grid} label="Сетка" drop /><Sep />
              <T i={I.axes} label="Система координат" /><Sep />
              <T i={I.ortho} label="Ортогональное черчение" w={28} /><T i={I.round} label="Округление" on /><Sep />
              <T i={I.yx} label="Координаты" /><Coord aria-label="X" defaultValue="-58.6999" /><Coord aria-label="Y" defaultValue="-4.27099" />
            </BarBody>
            <Overflow aria-label="Еще"><More /></Overflow>
          </Bar>
        </BarRow>
      </BarRows>
      <Work>
        <Side>
          <SideBar>
            <Grip $across />
            {side.map(([k, n], ix) => (
              <SideRow key={k}><Grip $h={15} /><SideTool $on={ix === 1} aria-label={n}>{S[k]}</SideTool></SideRow>
            ))}
            <SideRule />
            {big.map(([k, n]) => <BigTool key={k} aria-label={n}>{B[k]}</BigTool>)}
            <SideMore aria-label="Еще"><Svg w={7} h={7} crisp><path d="M0 0h1v7H0zM3 0l4 3.500L3 7z" fill="#000" /></Svg></SideMore>
          </SideBar>
        </Side>
        <Main>
          <TabStrip>
            <Nav $w={15} aria-label="Назад"><Svg w={6} h={9}><path d="M5 .5v8L1 4.500z" stroke="#000" /></Svg></Nav>
            <ActiveShape><ActiveTab>70.cdw -&gt;Вид 1</ActiveTab></ActiveShape>
            {tabs.map(([n, a, b]) => <Tab key={n} $a={a} $b={b}>{n}</Tab>)}
            <Fill />
            <Nav $w={18} aria-label="Вперед"><Svg w={6} h={9}><path d="M1 .5v8l4-4z" stroke="#000" /></Svg></Nav>
            <Nav $w={22} aria-label="Закрыть документ"><Svg w={9} h={8}><path d="M1 .5l7 7M8 .5l-7 7" stroke="#000" strokeWidth="1.600" /></Svg></Nav>
          </TabStrip>
          <Frame><Canvas><CadDrawing /></Canvas></Frame>
          <Lower>
            <Grip $h={71} />
            <LowerPanels><PropertyPanel /><MessagePanel /></LowerPanels>
          </Lower>
        </Main>
      </Work>
      <Status>Укажите новое положение выделенных объектов<Fill /><StatusCell /></Status>
      <TaskBar>
        <StartButton aria-label="Пуск">{L.start}</StartButton>
        <Task aria-label="Internet Explorer">{L.ie}</Task>
        <Task $open aria-label="Проводник">{L.explorer}</Task>
        <Task aria-label="Проигрыватель">{L.wmp}</Task>
        <Task aria-label="Chrome">{L.chrome}</Task>
        <Task $open $active aria-label="КОМПАС"><KLogo s={32} flat /></Task>
        <Task aria-label="Opera">{L.opera}</Task>
        <Task $open aria-label="Firefox">{L.firefox}</Task>
        <Task $open aria-label="Word">{L.word}</Task>
        <Task $open aria-label="Просмотр">{L.viewer}</Task>
        <Beam aria-hidden="true" viewBox="0 0 800 39" preserveAspectRatio="xMinYMid meet">
          <path d="M590 0h24l42 39h-24z" fill="#8fc2f2" opacity=".5" /><path d="M595 0h14l41 39h-14z" fill="#b4d8f8" opacity=".8" />
        </Beam>
        <Tray>
          <Lang>RU</Lang>
          {trayIcons.map(([n, i]) => <TrayButton key={n} aria-label={n}>{i}</TrayButton>)}
          <Clock>9:20<br />20.10.2011</Clock>
          <ShowDesktop aria-label="Показать рабочий стол" />
        </Tray>
      </TaskBar>
    </Screen>
  );
}
